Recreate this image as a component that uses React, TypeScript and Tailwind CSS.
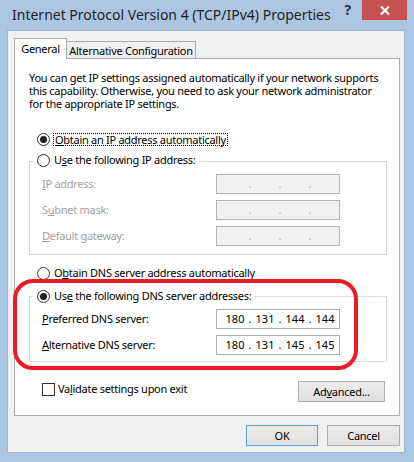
import type { ReactNode } from 'react'

// Windows 8 style "IPv4 Properties" dialog, with the red annotation around the DNS block.

function Radio({ checked = false }: { checked?: boolean }) {
  return (
    <span className="w-[13px] h-[13px] rounded-full border border-[#333] bg-white flex items-center justify-center shrink-0">
      {checked && <span className="w-[7px] h-[7px] rounded-full bg-[#222]" />}
    </span>
  )
}

function IpBox({ value, disabled = false }: { value?: string[]; disabled?: boolean }) {
  const parts = value ?? ['', '', '', '']
  return (
    <div
      className={`w-[124px] h-[20px] border flex items-center pl-[6px] tracking-normal ${
        disabled ? 'bg-[#f0f0f0] border-[#b5b5b5] text-[#a0a0a0]' : 'bg-white border-[#acacac] text-black'
      }`}
    >
      {parts.map((p, i) => (
        <span key={i} className="flex items-center">
          {i > 0 && <span className="w-[6px] text-center">.</span>}
          <span className="w-[24px] text-center">{p}</span>
        </span>
      ))}
    </div>
  )
}

function Row({ label, children, disabled = false }: { label: ReactNode; children: ReactNode; disabled?: boolean }) {
  return (
    <div className="h-[20px] flex items-center">
      <div className={`w-[186px] pl-[12px] ${disabled ? 'text-[#a0a0a0]' : 'text-black'}`}>{label}</div>
      {children}
    </div>
  )
}

function Button({ children, primary = false, className = '' }: { children: ReactNode; primary?: boolean; className?: string }) {
  return (
    <button
      type="button"
      className={`h-[21px] flex items-center justify-center bg-gradient-to-b from-[#ececec] to-[#e0e0e0] border ${
        primary ? 'border-[#5b9fdd]' : 'border-[#adadad]'
      } ${className}`}
    >
      {children}
    </button>
  )
}

export default function App() {
  return (
    <div className="relative w-[414px] h-[462px] bg-[#abc6e3] flex flex-col text-[11px] leading-[14px] tracking-[-0.28px] text-black font-['Segoe_UI','Noto_Sans',sans-serif]">
      {/* title bar */}
      <div className="h-[30px] flex items-start">
        <div className="pl-[12px] pt-[6px] text-[14px] leading-[18px] tracking-normal whitespace-nowrap text-[#1e1e1e]">
          Internet Protocol Version 4 (TCP/IPv4) Properties
        </div>
        <div className="ml-auto mr-[11px] pt-[3px] text-[14px] font-bold text-[#333]">?</div>
        <div className="w-[45px] h-[20px] mr-[7px] bg-[#c75050] flex items-center justify-center">
          <svg width="10" height="9" viewBox="0 0 10 9">
            <path d="M1 0.5 L9 8.5 M9 0.5 L1 8.5" stroke="white" strokeWidth="2" />
          </svg>
        </div>
      </div>

      {/* client area */}
      <div className="ml-[7px] mr-[9px] h-[423px] bg-[#f0f0f0] border border-[#9ab5d3] flex flex-col pl-[6px] pr-[4px] pt-[7px]">
        <div className="h-[20px] flex items-end whitespace-nowrap">
          <div className="relative z-10 w-[53px] h-[21px] -mb-[1px] bg-white border-l border-t border-r border-[#acacac] flex items-center justify-center pb-[1px]">
            General
          </div>
          <div className="w-[129px] h-[17px] bg-[#f0f0f0] border-t border-r border-[#acacac] flex items-center justify-center pt-[1px]">
            Alternative Configuration
          </div>
        </div>

        {/* tab panel */}
        <div className="h-[358px] bg-white border border-[#acacac] flex flex-col">
          <p className="pl-[14px] pr-[18px] pt-[12px] leading-[13px]">
            You can get IP settings assigned automatically if your network supports this capability. Otherwise, you need to ask your network administrator for the appropriate IP settings.
          </p>

          <div className="mt-[22px] ml-[22px] h-[15px] flex items-center gap-[3px]">
            <Radio checked />
            <span className="border border-dotted border-black px-[1px] leading-[11px] h-[13px]">
              <u>O</u>btain an IP address automatically
            </span>
          </div>

          {/* static address group */}
          <div className="mt-[14px] ml-[14px] w-[358px] border border-[#dcdcdc] pb-[8px]">
            <div className="-mt-[9px] h-[14px] flex">
              <div className="ml-[3px] pl-[4px] pr-[3px] bg-white flex items-center gap-[4px]">
                <Radio />
                <span>
                  U<u>s</u>e the following IP address:
                </span>
              </div>
            </div>
            <div className="mt-[7px] flex flex-col gap-[6px]">
              <Row disabled label={<><u>I</u>P address:</>}>
                <IpBox disabled />
              </Row>
              <Row disabled label={<>S<u>u</u>bnet mask:</>}>
                <IpBox disabled />
              </Row>
              <Row disabled label={<><u>D</u>efault gateway:</>}>
                <IpBox disabled />
              </Row>
            </div>
          </div>

          <div className="mt-[11px] ml-[22px] h-[14px] flex items-center gap-[4px]">
            <Radio />
            <span>
              O<u>b</u>tain DNS server address automatically
            </span>
          </div>

          {/* DNS group */}
          <div className="mt-[16px] ml-[14px] w-[358px] border border-[#dcdcdc] pb-[6px]">
            <div className="-mt-[8px] h-[14px] flex">
              <div className="ml-[3px] pl-[4px] pr-[3px] bg-white flex items-center gap-[4px]">
                <Radio checked />
                <span>
                  Us<u>e</u> the following DNS server addresses:
                </span>
              </div>
            </div>
            <div className="mt-[6px] flex flex-col gap-[6px]">
              <Row label={<><u>P</u>referred DNS server:</>}>
                <IpBox value={['180', '131', '144', '144']} />
              </Row>
              <Row label={<><u>A</u>lternative DNS server:</>}>
                <IpBox value={['180', '131', '145', '145']} />
              </Row>
            </div>
          </div>

          <div className="mt-[19px] flex items-start">
            <div className="ml-[27px] mt-[1px] flex items-center gap-[3px]">
              <span className="w-[13px] h-[13px] border border-[#333] bg-white" />
              <span>
                Va<u>l</u>idate settings upon exit
              </span>
            </div>
            <Button className="ml-auto mr-[14px] w-[87px]">
              Ad<u>v</u>anced...
            </Button>
          </div>
        </div>

        <div className="mt-[9px] flex justify-end gap-[9px]">
          <Button primary className="w-[72px]">OK</Button>
          <Button className="w-[73px]">Cancel</Button>
        </div>
      </div>

      {/* red annotation around the DNS settings */}
      <div className="absolute left-[13px] top-[279px] w-[345px] h-[91px] border-[4px] border-[#ec1c24] rounded-[20px] pointer-events-none" />
    </div>
  )
}
